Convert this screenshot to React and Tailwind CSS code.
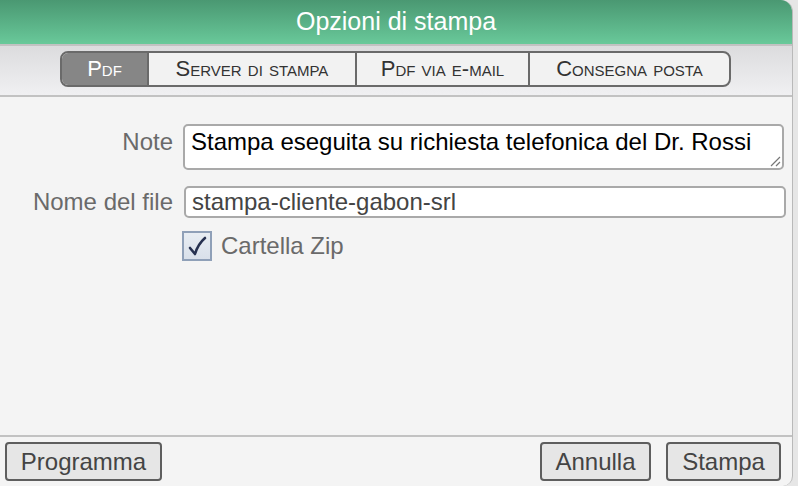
import React from "react";

const segs = [
  { t: "Pdf", w: "w-[85px]", active: true },
  { t: "Server di stampa", w: "w-[208px]" },
  { t: "Pdf via e-mail", w: "w-[173px]" },
  { t: "Consegna posta", w: "w-[201px]" },
];

export default function App() {
  return (
    <div className="w-[798px] h-[486px] bg-[#e6e6e6] flex overflow-hidden font-['Liberation_Sans',Arial,sans-serif]">
      <div className="w-[793px] h-full flex flex-col bg-[#f4f4f4] rounded-tr-[12px] rounded-br-[10px] border-r border-[#b9b9b9] overflow-hidden">
        {/* Title bar */}
        <div className="h-[44px] shrink-0 bg-gradient-to-b from-[#4a9872] to-[#69c99a] flex items-center justify-center text-white text-[25px] leading-none pb-[1px]">
          Opzioni di stampa
        </div>
        {/* Toolbar */}
        <div className="h-[53px] shrink-0 border-t-2 border-b-2 border-[#c2c2c2] bg-gradient-to-b from-[#dcdcde] to-[#f0f0f2] flex justify-center pt-[5px]">
          <div className="flex h-[36px] border-2 border-[#6a6a6a] rounded-[8px] overflow-hidden bg-[#f2f2f2] ml-[-1px]">
            {segs.map((s, i) => (
              <div
                key={i}
                className={`${s.w} flex items-center justify-center text-[22px] leading-none [font-variant:small-caps] ${
                  i > 0 ? "border-l-2 border-[#6a6a6a]" : ""
                } ${s.active ? "bg-[#868686] text-white" : "text-[#333]"}`}
              >
                {s.t}
              </div>
            ))}
          </div>
        </div>
        {/* Content */}
        <div className="flex-1 pt-[27px] pr-[8px]">
          <div className="grid grid-cols-[173px_1fr] gap-x-[10px]">
            <div className="text-right text-[24px] text-[#6a6a6a] pt-[4px] leading-[28px]">Note</div>
            <div className="relative h-[46px] border-2 border-[#a9a9a9] rounded-[5px] bg-white pl-[6px] pt-[2px] text-[24px] leading-[28px] text-black">
              Stampa eseguita su richiesta telefonica del Dr. Rossi
              <svg className="absolute right-[1px] bottom-[1px]" width="12" height="12" viewBox="0 0 12 12">
                <path d="M2 11 L11 2 M7 11 L11 7" stroke="#777" strokeWidth="1.2" />
              </svg>
            </div>
            <div className="text-right text-[24px] text-[#6a6a6a] mt-[16px] leading-[32px]">Nome del file</div>
            <div className="mt-[16px] ml-[1px] mr-[-2px] h-[32px] border-2 border-[#a9a9a9] rounded-[5px] bg-white pl-[6px] text-[24px] leading-[27px] text-[#444]">
              stampa-cliente-gabon-srl
            </div>
            <div />
            <div className="mt-[13px] flex items-center gap-[9px] -ml-[1px]">
              <div className="w-[30px] h-[30px] border-2 border-[#8fa0b8] bg-gradient-to-b from-[#e8edf3] to-[#d9e0ea]">
                <svg width="26" height="26" viewBox="0 0 26 26">
                  <path d="M6 15 L11 21 Q14 11 21 5" fill="none" stroke="#263150" strokeWidth="2.6" strokeLinecap="round" strokeLinejoin="round" />
                </svg>
              </div>
              <span className="text-[24px] leading-none text-[#6a6a6a]">Cartella Zip</span>
            </div>
          </div>
        </div>
        {/* Footer */}
        <div className="h-[51px] shrink-0 border-t-2 border-[#c2c2c2] flex items-start pt-[5px] pl-[5px] pr-[11px]">
          <button className="h-[39px] w-[157px] border-2 border-[#5e5e5e] rounded-[4px] bg-[#e6e6e6] text-[24px] leading-none text-[#444]">
            Programma
          </button>
          <div className="flex-1" />
          <button className="h-[39px] w-[111px] border-2 border-[#5e5e5e] rounded-[4px] bg-[#e6e6e6] text-[24px] leading-none text-[#444]">
            Annulla
          </button>
          <button className="h-[39px] w-[115px] ml-[15px] border-2 border-[#5e5e5e] rounded-[4px] bg-[#e6e6e6] text-[24px] leading-none text-[#444]">
            Stampa
          </button>
        </div>
      </div>
    </div>
  );
}
